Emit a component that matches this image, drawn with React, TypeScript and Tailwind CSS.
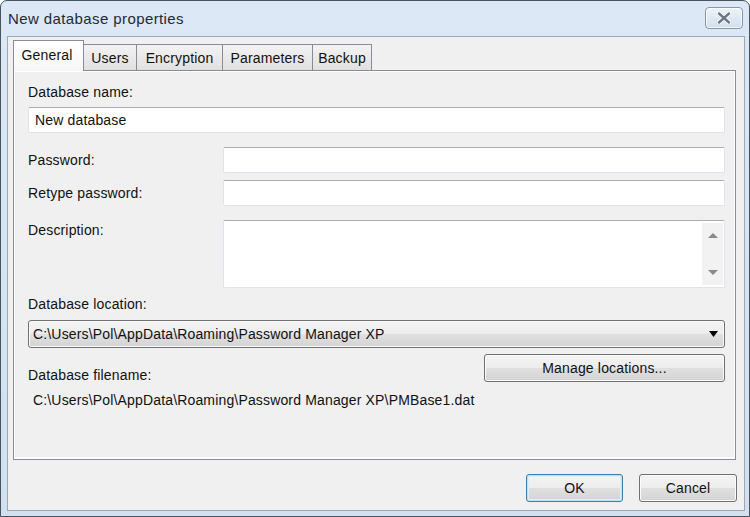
import React from 'react';

const tabs = [
  { label: 'General', w: 'w-[71px]' },
  { label: 'Users', w: 'w-[54px]' },
  { label: 'Encryption', w: 'w-[87px]' },
  { label: 'Parameters', w: 'w-[91px]' },
  { label: 'Backup', w: 'w-[60px]' },
];

const CloseButton: React.FC = () => (
  <div className="flex h-[22px] w-[38px] items-center justify-center rounded-[4px] border border-[#8796ab] bg-gradient-to-b from-[#eef3f9] to-[#d3dfed] shadow-[inset_0_0_0_1px_rgba(255,255,255,0.7)]">
    <svg width="14" height="12" viewBox="0 0 14 12">
      <path d="M2 1.5 L12 10.5 M12 1.5 L2 10.5" stroke="#ffffff" strokeWidth="4.2" strokeLinecap="round" />
      <path d="M2 1.5 L12 10.5 M12 1.5 L2 10.5" stroke="#6b7789" strokeWidth="2.4" strokeLinecap="round" />
    </svg>
  </div>
);

const TextBox: React.FC<{ value?: string; className?: string }> = ({ value, className = '' }) => (
  <div
    className={`flex h-[26px] items-center rounded-[2px] border border-[#e2e3ea] border-t-[#abadb3] bg-white pl-[6px] ${className}`}
  >
    {value}
  </div>
);

const Button: React.FC<{ label: string; focused?: boolean; className?: string }> = ({
  label,
  focused,
  className = '',
}) => (
  <div
    className={`flex h-[28px] items-center justify-center rounded-[3px] border ${
      focused
        ? 'border-[#3c7fb1] shadow-[inset_0_0_0_1px_#b9e3f8,inset_0_0_0_2px_#d9f0fb]'
        : 'border-[#707070] shadow-[inset_0_0_0_1px_#fbfbfb]'
    } bg-[linear-gradient(to_bottom,#f4f4f4_0%,#ededed_50%,#e0e0e0_50%,#d4d4d4_100%)] ${className}`}
  >
    {label}
  </div>
);

const App: React.FC = () => {
  return (
    <div className="h-[517px] w-[750px] font-['Liberation_Sans',Arial,sans-serif] text-[14px] leading-[18px] tracking-[0.16px] text-[#111]">
      <div className="flex h-full flex-col rounded-t-[7px] border border-[#48535f] bg-gradient-to-b from-[#dce8f5] to-[#d2e0ef]">
        {/* Title bar */}
        <div className="flex h-[35px] shrink-0 items-start justify-between pl-[7px] pr-[6px]">
          <span className="mt-[9px] text-[15px] tracking-[0.4px] text-[#1f2a36]">New database properties</span>
          <div className="mt-[6px]">
            <CloseButton />
          </div>
        </div>

        {/* Client area */}
        <div className="mb-[5px] ml-[6px] mr-[4px] flex flex-1 flex-col border border-[#9aa9ba] bg-[#f0f0f0] pb-[8px] pl-[5px] pr-[7px] pt-[3px]">
          {/* Tabs */}
          <div className="flex h-[30px] items-end">
            {tabs.map((t, i) =>
              i === 0 ? (
                <div
                  key={t.label}
                  className={`relative z-10 -mb-px flex h-[31px] ${t.w} items-center justify-center border border-b-0 border-[#898c95] bg-gradient-to-b from-white to-[#f7f7f7] pb-[2px] pr-[3px]`}
                >
                  {t.label}
                </div>
              ) : (
                <div
                  key={t.label}
                  className={`-ml-px flex h-[26px] ${t.w} items-center justify-center border border-b-0 border-[#898c95] bg-gradient-to-b from-[#f3f3f3] to-[#e0e0e0]`}
                >
                  {t.label}
                </div>
              ),
            )}
          </div>

          {/* Tab panel */}
          <div className="mr-px flex h-[390px] flex-col border border-[#898c95] bg-[#f0f0f0] pl-[14px] pr-[10px] pt-[12px] shadow-[inset_1px_1px_0_#ffffff,inset_-1px_-2px_0_#ffffff]">
            <div>Database name:</div>
            <TextBox value="New database" className="mt-[6px]" />

            <div className="mt-[14px] flex items-center">
              <div className="w-[195px]">Password:</div>
              <TextBox className="flex-1" />
            </div>
            <div className="mt-[7px] flex items-center">
              <div className="w-[195px]">Retype password:</div>
              <TextBox className="flex-1" />
            </div>

            <div className="mt-[14px] flex items-start">
              <div className="w-[195px] pt-[1px]">Description:</div>
              <div className="flex h-[68px] flex-1 rounded-[2px] border border-[#e2e3ea] border-t-[#abadb3] bg-white">
                <div className="flex-1" />
                <div className="my-[2px] mr-px flex w-[21px] flex-col items-center justify-between bg-[#f2f2f2] py-[10px]">
                  <svg width="10" height="5" viewBox="0 0 10 5">
                    <path d="M0 5 L5 0 L10 5 Z" fill="#8a8a8a" />
                  </svg>
                  <svg width="10" height="5" viewBox="0 0 10 5">
                    <path d="M0 0 L10 0 L5 5 Z" fill="#8a8a8a" />
                  </svg>
                </div>
              </div>
            </div>

            <div className="mt-[7px]">Database location:</div>
            <div className="mt-[7px] flex h-[28px] items-center justify-between rounded-[3px] border border-[#707070] bg-[linear-gradient(to_bottom,#f4f4f4_0%,#ededed_50%,#e0e0e0_50%,#d4d4d4_100%)] pl-[4px] pr-[6px] shadow-[inset_0_0_0_1px_#fbfbfb]">
              <span>C:\Users\Pol\AppData\Roaming\Password Manager XP</span>
              <svg width="9" height="6" viewBox="0 0 9 6">
                <path d="M0 0 L9 0 L4.5 6 Z" fill="#000" />
              </svg>
            </div>

            <div className="mt-[6px] flex items-end justify-between">
              <div className="-mb-[2px]">Database filename:</div>
              <Button label="Manage locations..." className="w-[241px]" />
            </div>
            <div className="mt-[9px] pl-[5px]">C:\Users\Pol\AppData\Roaming\Password Manager XP\PMBase1.dat</div>
          </div>

          {/* Dialog buttons */}
          <div className="mt-[14px] flex justify-end gap-[16px]">
            <Button label="OK" focused className="w-[97px]" />
            <Button label="Cancel" className="w-[98px]" />
          </div>
        </div>
      </div>
    </div>
  );
};

export default App;
